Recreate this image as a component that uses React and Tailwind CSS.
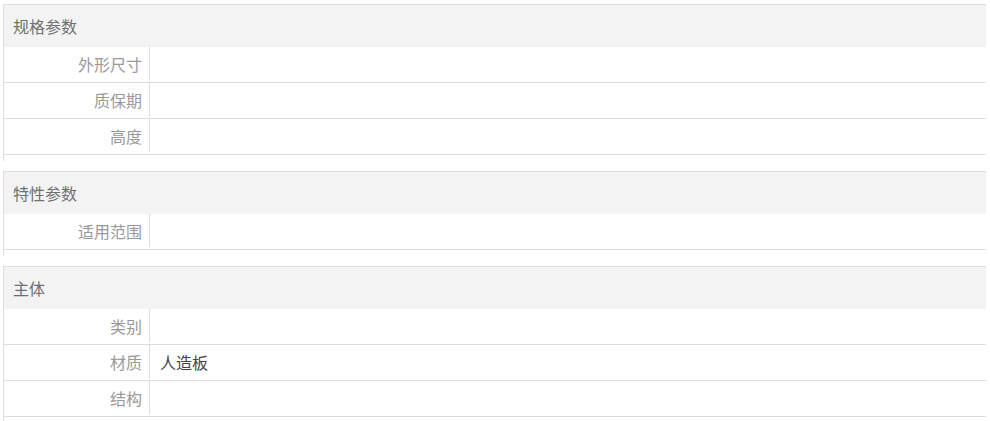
const sections = [
  {
    title: "规格参数",
    rows: [
      { label: "外形尺寸", value: "" },
      { label: "质保期", value: "" },
      { label: "高度", value: "" },
    ],
  },
  {
    title: "特性参数",
    rows: [{ label: "适用范围", value: "" }],
  },
  {
    title: "主体",
    rows: [
      { label: "类别", value: "" },
      { label: "材质", value: "人造板" },
      { label: "结构", value: "" },
    ],
  },
];

const SpecSection = ({ title, rows }) => (
  <div className="border-t border-l border-[#dddddd] pb-[6px] mb-[10px]">
    <div className="h-[42px] bg-[#f3f3f3] flex items-center pl-[9px] text-[16px] leading-none text-[#707070]">
      {title}
    </div>
    {rows.map((row) => (
      <div key={row.label} className="h-9 border-b border-[#dddddd] flex items-start text-[16px] leading-none">
        <div className="w-[146px] h-[33px] border-r border-[#dddddd] flex items-center justify-end pr-[7px] text-[#999999]">
          {row.label}
        </div>
        <div className="h-[33px] flex items-center pl-[10px] text-[#444444]">{row.value}</div>
      </div>
    ))}
  </div>
);

export default function App() {
  return (
    <div
      className="bg-white w-[990px] h-[421px] overflow-hidden pt-[4px] pl-[3px]"
      style={{ fontFamily: '"Noto Sans CJK SC", "Liberation Sans", sans-serif' }}
    >
      <div className="w-[983px]">
        {sections.map((s) => (
          <SpecSection key={s.title} title={s.title} rows={s.rows} />
        ))}
      </div>
    </div>
  );
}
